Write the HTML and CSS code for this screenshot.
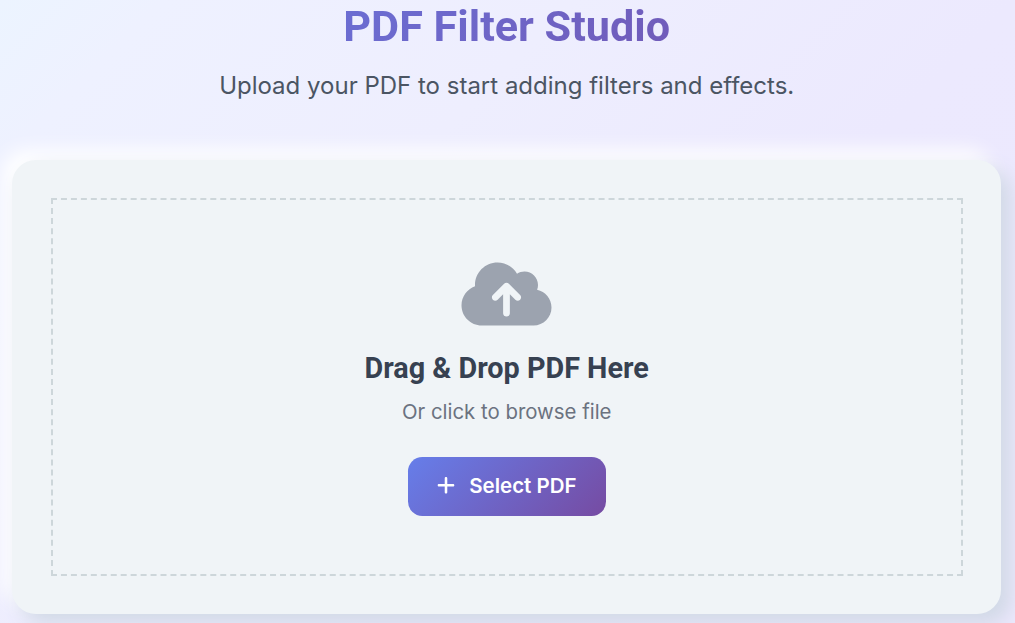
FILE: index.html
```
<!DOCTYPE html>
<html lang="en">

<head>
    <meta charset="UTF-8">
    <meta name="viewport" content="width=device-width, initial-scale=1.0">
    <title>PDF Filter Studio</title>
    <link rel="stylesheet" href="styles.css">
</head>

<body>
    <div class="container">
        <header class="page-header">
            <h1>PDF Filter Studio</h1>
            <p class="subtitle">Upload your PDF to start adding filters and effects.</p>
        </header>

        <div class="upload-card">
            <div class="drop-zone" id="dropZone">
                <svg class="upload-icon" viewBox="0 0 640 512" fill="currentColor" aria-hidden="true">
                    <path d="M144 480C64.5 480 0 415.5 0 336c0-62.8 40.2-116.2 96.2-135.9c-.1-2.7-.2-5.4-.2-8.1c0-88.4 71.6-160 160-160c59.3 0 111 32.2 138.7 80.2C409.9 102 428.3 96 448 96c53 0 96 43 96 96c0 12.2-2.3 23.8-6.4 34.6C596 238.4 640 290.1 640 352c0 70.7-57.3 128-128 128H144zm79-217c-9.4 9.4-9.4 24.6 0 33.9s24.6 9.4 33.9 0l39-39V392c0 13.3 10.7 24 24 24s24-10.7 24-24V257.9l39 39c9.4 9.4 24.6 9.4 33.9 0s9.4-24.6 0-33.9l-80-80c-9.4-9.4-24.6-9.4-33.9 0l-80 80z"/>
                </svg>
                <h2>Drag &amp; Drop PDF Here</h2>
                <p class="hint">Or click to browse file</p>
                <button type="button" class="btn-select">
                    <svg class="plus-icon" viewBox="0 0 448 512" fill="currentColor" aria-hidden="true">
                        <path d="M256 80c0-17.7-14.3-32-32-32s-32 14.3-32 32V224H48c-17.7 0-32 14.3-32 32s14.3 32 32 32H192V432c0 17.7 14.3 32 32 32s32-14.3 32-32V288H400c17.7 0 32-14.3 32-32s-14.3-32-32-32H256V80z"/>
                    </svg>
                    <span>Select PDF</span>
                </button>
            </div>
        </div>
    </div>
</body>

</html>
```
FILE: styles.css
```
* {
    box-sizing: border-box;
    margin: 0;
    padding: 0;
}

body {
    height: 623px;
    overflow: hidden;
    font-family: Inter, sans-serif;
    background: linear-gradient(135deg, #ecf4ff 0%, #eef1ff 10%, #eeeefe 35%, #ece9fe 62%, #ece8fd 100%);
}

.container {
    padding: 0 14px 0 12.4px;
}

.page-header {
    height: 160px;
    padding-top: 2px;
    text-align: center;
}

h1 {
    font-family: Roboto, sans-serif;
    font-size: 43.2px;
    font-weight: 700;
    line-height: 50px;
    background: linear-gradient(135deg, #667eea 0%, #764ba2 100%);
    -webkit-background-clip: text;
    background-clip: text;
    color: transparent;
}

.subtitle {
    margin-top: 16px;
    font-size: 24px;
    line-height: 35px;
    color: #4b5563;
}

.upload-card {
    height: 454px;
    padding: 38.4px;
    border-radius: 24px;
    background: #f0f4f7;
    box-shadow: 9.6px 9.6px 19.2px #d1d9e6, -9.6px -9.6px 19.2px #ffffff;
}

.drop-zone {
    display: flex;
    flex-direction: column;
    align-items: center;
    height: 100%;
    padding-top: 57.6px;
    border: 2px dashed #cdd6da;
}

.upload-icon {
    width: 91px;
    height: 72px;
    color: #9ca3af;
}

h2 {
    margin-top: 20px;
    font-family: Roboto, sans-serif;
    font-size: 28.8px;
    font-weight: 700;
    line-height: 36px;
    color: #374151;
}

.hint {
    margin-top: 11px;
    font-size: 20.4px;
    line-height: 30px;
    color: #6b7280;
}

.btn-select {
    display: flex;
    align-items: center;
    justify-content: center;
    gap: 14.4px;
    width: 198px;
    height: 59px;
    margin-top: 29.6px;
    padding-bottom: 1.5px;
    border: none;
    border-radius: 14.4px;
    background: linear-gradient(135deg, #667eea 0%, #764ba2 100%);
    color: #fff;
    font-family: Inter, sans-serif;
    font-size: 20.5px;
    font-weight: 600;
    cursor: pointer;
}

.plus-icon {
    width: 18px;
    height: 20.5px;
}
```
